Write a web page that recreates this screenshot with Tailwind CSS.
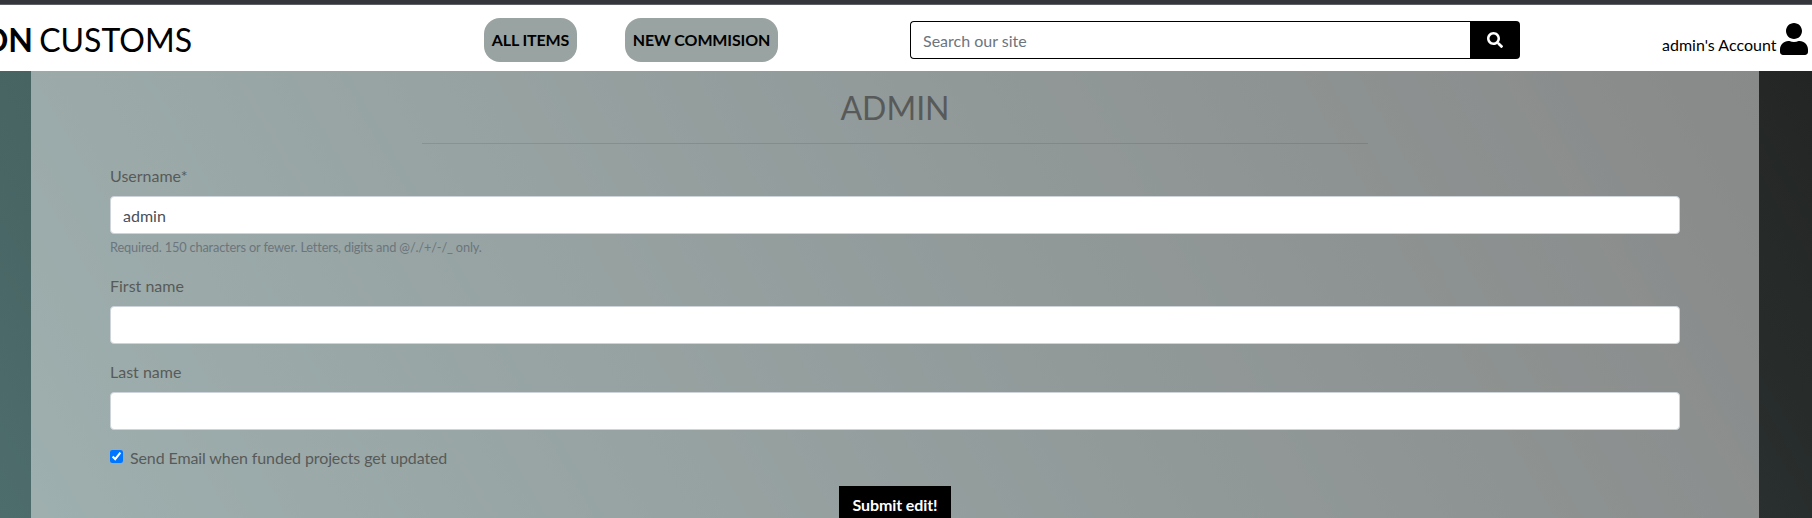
<!DOCTYPE html>
<html lang="en">
<head>
<meta charset="utf-8">
<title>Admin</title>
<script src="https://cdn.jsdelivr.net/npm/@tailwindcss/browser@4"></script>
</head>
<body class="h-[518px] overflow-hidden flex flex-col font-['Lato',sans-serif] text-base text-black bg-white">
  <div class="h-[5px] shrink-0 bg-[#35363a] border-b border-[#5f6064]"></div>
  <header class="h-[66px] shrink-0 flex items-start bg-white overflow-hidden whitespace-nowrap">
    <div class="w-[484px] shrink-0 overflow-hidden flex">
      <div class="w-[192px] flex justify-end text-[32px] leading-[40px] mt-[15px]"><span class="[word-spacing:-2px]"><strong class="font-bold">ON</strong> CUSTOMS</span></div>
    </div>
    <nav class="flex gap-12 mt-[13px] w-[426px] shrink-0 font-bold tracking-[-0.13px]">
      <a class="h-11 w-[93px] rounded-2xl bg-[#99a3a2] flex items-center justify-center">ALL ITEMS</a>
      <a class="h-11 w-[153px] rounded-2xl bg-[#99a3a2] flex items-center justify-center">NEW COMMISION</a>
    </nav>
    <form class="flex h-[38px] w-[610px] shrink-0 mt-4">
      <input class="w-[560px] border border-r-0 border-black rounded-l px-3 pt-0.5 placeholder:text-[#6c757d]" placeholder="Search our site">
      <button type="button" class="w-[50px] bg-black rounded-r flex items-center justify-center">
        <svg class="size-4" viewBox="0 0 512 512" fill="white"><path d="M505 442.700 405.300 343c-4.500-4.500-10.600-7-17-7H372c27.600-35.300 44-79.700 44-128C416 93.100 322.900 0 208 0S0 93.100 0 208s93.100 208 208 208c48.300 0 92.700-16.400 128-44v16.300c0 6.400 2.500 12.500 7 17l99.700 99.700c9.400 9.400 24.600 9.400 33.900 0l28.300-28.300c9.400-9.400 9.400-24.600.1-34zM208 336c-70.700 0-128-57.200-128-128 0-70.700 57.200-128 128-128 70.700 0 128 57.200 128 128 0 70.700-57.200 128-128 128z"/></svg>
      </button>
    </form>
    <div class="flex ml-[142px] mt-[18px]">
      <span class="mt-[10px] leading-6 w-[117px]">admin's Account</span>
      <svg class="w-7 h-8 ml-px shrink-0" viewBox="0 0 448 512"><path d="M224 256c70.700 0 128-57.300 128-128S294.700 0 224 0 96 57.300 96 128s57.300 128 128 128zm89.600 32h-16.700c-22.200 10.200-46.900 16-72.900 16s-50.600-5.800-72.900-16h-16.700C60.200 288 0 348.200 0 422.400V464c0 26.500 21.500 48 48 48h352c26.500 0 48-21.500 48-48v-41.600c0-74.200-60.200-134.400-134.400-134.400z"/></svg>
    </div>
  </header>
  <main class="flex-1 pl-[31px] pr-[53px] bg-[linear-gradient(60deg,#4d6d6c,#232524)]">
    <section class="h-full px-[79px] pt-[17px] bg-white/46 text-[#585a59]">
      <h1 class="text-center text-[32px] leading-[40px]">ADMIN</h1>
      <hr class="w-[946px] mx-auto mt-[15px] mb-5 border-0 h-px bg-black/10">
      <form>
        <div class="mb-4">
          <label class="block leading-6 mb-2">Username*</label>
          <input class="block w-full h-[38px] bg-white border border-[#ced4da] rounded px-3 text-[#495057]" value="admin">
          <small class="block mt-1 mb-[17px] text-[12.8px] leading-[19px] tracking-[-0.17px] text-[#6c757d]">Required. 150 characters or fewer. Letters, digits and @/./+/-/_ only.</small>
        </div>
        <div class="mb-4">
          <label class="block leading-6 mb-2">First name</label>
          <input class="block w-full h-[38px] bg-white border border-[#ced4da] rounded">
        </div>
        <div class="mb-4">
          <label class="block leading-6 mb-2">Last name</label>
          <input class="block w-full h-[38px] bg-white border border-[#ced4da] rounded">
        </div>
        <label class="flex leading-6 mb-4 tracking-[-0.11px]"><input type="checkbox" checked class="size-[13px] mt-1 mr-[7px] accent-[#0075ff]">Send Email when funded projects get updated</label>
        <button type="button" class="block mx-auto w-28 h-[38px] bg-black text-white font-bold tracking-[-0.1px]">Submit edit!</button>
      </form>
    </section>
  </main>
</body>
</html>
